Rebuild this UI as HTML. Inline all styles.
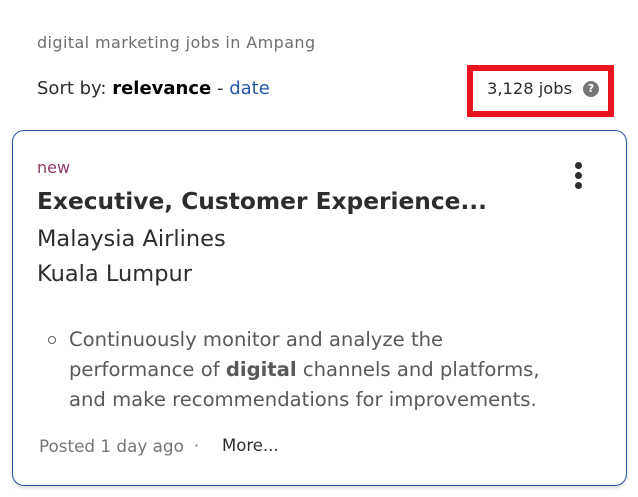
<!DOCTYPE html>
<html><head><meta charset="utf-8"><style>
*{margin:0;padding:0;box-sizing:border-box}
body{width:638px;height:497px;background:#fff;font-family:"DejaVu Sans",sans-serif;position:relative;overflow:hidden;color:#2d2d2d}
.a{position:absolute;white-space:nowrap}
</style></head><body>
<div class="a" style="left:37px;top:33px;font-size:16px;color:#6f6f6f;letter-spacing:0.4px">digital marketing jobs in Ampang</div>
<div class="a" style="left:37px;top:78px;font-size:18px;color:#2d2d2d">Sort by: <b style="color:#000">relevance</b> - <span style="color:#2557a7">date</span></div>
<div class="a" style="left:467px;top:65px;width:147px;height:52px;border:6px solid #e8141e"></div>
<div class="a" style="left:487px;top:79px;font-size:16.3px;color:#2d2d2d">3,128 jobs</div>
<div class="a" style="left:583px;top:81px;width:16px;height:16px;border-radius:50%;background:#767676;color:#fff;font-size:11px;font-weight:bold;text-align:center;line-height:16px">?</div>
<div class="a" style="left:12px;top:130px;width:615px;height:356px;border:1px solid #2557a7;border-radius:12px;box-shadow:0 2px 3px rgba(0,0,0,.15)"></div>
<div class="a" style="left:575px;top:162px;width:7px;height:7px;border-radius:50%;background:#2d2d2d"></div>
<div class="a" style="left:575px;top:172px;width:7px;height:7px;border-radius:50%;background:#2d2d2d"></div>
<div class="a" style="left:575px;top:182px;width:7px;height:7px;border-radius:50%;background:#2d2d2d"></div>
<div class="a" style="left:37px;top:158px;font-size:16px;color:#8c3a66">new</div>
<div class="a" style="left:37px;top:188px;font-size:23.3px;font-weight:bold;color:#2d2d2d">Executive, Customer Experience...</div>
<div class="a" style="left:37px;top:226px;font-size:22.5px;color:#2d2d2d">Malaysia Airlines</div>
<div class="a" style="left:37px;top:261px;font-size:22.5px;color:#2d2d2d">Kuala Lumpur</div>
<div class="a" style="left:48px;top:336px;width:8px;height:8px;border-radius:50%;border:1px solid #595959"></div>
<div class="a" style="left:69px;top:325px;font-size:19.6px;line-height:30px;color:#595959">Continuously monitor and analyze the<br>performance of <b>digital</b> channels and platforms,<br>and make recommendations for improvements.</div>
<div class="a" style="left:39px;top:436px;font-size:16.8px;color:#767676">Posted 1 day ago</div>
<div class="a" style="left:194px;top:436px;font-size:16px;color:#767676">·</div>
<div class="a" style="left:222px;top:436px;font-size:16.5px;color:#2d2d2d">More...</div>
</body></html>
